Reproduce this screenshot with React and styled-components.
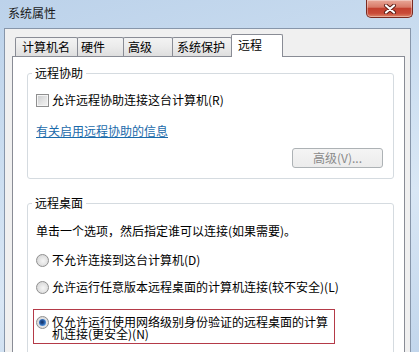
import React from "react";
import styled, { createGlobalStyle } from "styled-components";

const GlobalStyle = createGlobalStyle`
  html, body {
    margin: 0;
    padding: 0;
    overflow: hidden;
    background: #fff;
  }
  body {
    font-family: "Noto Sans CJK SC", "Noto Sans", sans-serif;
    font-size: 12px;
    color: #000;
  }
`;

const Window = styled.div`
  width: 419px;
  height: 352px;
  display: flex;
  flex-direction: column;
  overflow: hidden;
  background: linear-gradient(165deg, #bcd2ea 0%, #cddff1 40%, #d9e7f5 65%, #c2d6ec 100%);
`;

const TitleBar = styled.div`
  height: 28px;
  flex-shrink: 0;
  display: flex;
  justify-content: space-between;
  align-items: flex-start;
  padding: 0 6px 0 8px;
  box-sizing: border-box;
`;

const Title = styled.div`
  padding-top: 6px;
  line-height: 14px;
  color: #1a1a1a;
`;

const CloseButton = styled.div`
  width: 47px;
  height: 18px;
  box-sizing: border-box;
  border: 1px solid #7a2a20;
  border-top: none;
  border-radius: 0 0 5px 5px;
  background: linear-gradient(
    to bottom,
    #e9a898 0%,
    #d87a68 42%,
    #c3412f 50%,
    #c94a38 78%,
    #de8669 100%
  );
  box-shadow: inset 0 0 0 1px rgba(255, 255, 255, 0.35);
  display: flex;
  align-items: center;
  justify-content: center;
`;

const Client = styled.div`
  flex: 1;
  min-height: 0;
  margin: 0 8px 0 4px;
  border: 1px solid #8796aa;
  border-bottom: none;
  background: #f0f0f0;
  padding: 5px 5px 0 7px;
  display: flex;
  flex-direction: column;
`;

const TabStrip = styled.div`
  display: flex;
  align-items: flex-end;
  height: 22px;
  flex-shrink: 0;
  padding-left: 3px;
`;

const Tab = styled.div`
  box-sizing: border-box;
  width: ${(p) => p.$w}px;
  height: ${(p) => (p.$active ? 23 : 19)}px;
  margin-bottom: ${(p) => (p.$active ? -1 : 0)}px;
  padding-left: ${(p) => p.$pad}px;
  border: 1px solid #898c95;
  border-bottom: none;
  border-radius: 2px 2px 0 0;
  line-height: ${(p) => (p.$active ? 20 : 18)}px;
  white-space: nowrap;
  background: ${(p) =>
    p.$active ? "#fff" : "linear-gradient(to bottom, #f3f3f3 0%, #ebebeb 50%, #dedede 100%)"};
  position: relative;
  z-index: ${(p) => (p.$active ? 2 : 1)};
  & + & {
    margin-left: -1px;
  }
`;

const Panel = styled.div`
  flex: 1;
  background: #fff;
  border: 1px solid #898c95;
  padding: 0 10px 0 14px;
`;

const GroupBox = styled.fieldset`
  margin: ${(p) => p.$top}px 0 0;
  padding: 0 0 ${(p) => p.$bottom}px;
  border: 1px solid #d5dbe0;
  border-radius: 3px;
  min-width: 0;
`;

const Legend = styled.legend`
  margin-left: 4px;
  padding: 0 3px;
  line-height: 14px;
`;

const GroupBody = styled.div`
  display: flex;
  flex-direction: column;
  align-items: flex-start;
  padding: 0 10px 0 8px;
`;

const Row = styled.div`
  display: flex;
  align-items: center;
  gap: 3px;
  line-height: 14px;
  margin-top: ${(p) => p.$top}px;
  white-space: nowrap;
`;

const Text = styled.div`
  line-height: 14px;
  margin-top: ${(p) => p.$top}px;
  white-space: nowrap;
`;

const CheckBox = styled.span`
  width: 13px;
  height: 13px;
  box-sizing: border-box;
  flex-shrink: 0;
  border: 1px solid #8f8f8f;
  background: linear-gradient(135deg, #c9cbcd 0%, #e6e6e6 60%, #f3f3f3 100%);
  box-shadow: inset 0 0 0 1px #f5f5f5;
`;

const Radio = styled.span`
  width: 13px;
  height: 13px;
  box-sizing: border-box;
  flex-shrink: 0;
  border: 1px solid #8f8f8f;
  border-radius: 50%;
  background: radial-gradient(circle at 55% 55%, #f6f6f6 0%, #e0e0e0 55%, #cfcfcf 100%);
  display: flex;
  align-items: center;
  justify-content: center;
  &::after {
    content: "";
    display: ${(p) => (p.$checked ? "block" : "none")};
    width: 7px;
    height: 7px;
    border-radius: 50%;
    background: radial-gradient(
      circle at 45% 45%,
      #14305e 0%,
      #23539a 35%,
      #4f92dc 70%,
      #9cc8f2 100%
    );
  }
`;

const Link = styled.a`
  margin-top: 17px;
  line-height: 14px;
  color: #1a6aaa;
  text-decoration: underline;
  cursor: pointer;
`;

const ButtonRow = styled.div`
  align-self: stretch;
  display: flex;
  justify-content: flex-end;
  margin-top: 10px;
`;

const Button = styled.button`
  width: 91px;
  height: 20px;
  padding: 0;
  border: 1px solid #adb2b5;
  border-radius: 3px;
  background: linear-gradient(to bottom, #f4f4f4, #ececec);
  color: #8a8a8a;
  font-family: inherit;
  font-size: 12px;
  line-height: 18px;
`;

const Highlight = styled.div`
  margin: 15px 0 0 -3px;
  width: 302px;
  box-sizing: border-box;
  border: 1px solid #b43a48;
  padding: 6px 0 3px 2px;
  display: flex;
  align-items: flex-start;
  gap: 3px;
`;

const WrapText = styled.div`
  width: 280px;
  line-height: 12px;
`;

const tabs = [
  { label: "计算机名", w: 63, pad: 6 },
  { label: "硬件", w: 47, pad: 3 },
  { label: "高级", w: 50, pad: 4 },
  { label: "系统保护", w: 60, pad: 4 },
  { label: "远程", w: 52, pad: 6, active: true },
];

const CloseGlyph = () => (
  <svg width="14" height="10" viewBox="0 0 14 10">
    <path d="M3 1.5 L11 8.5 M11 1.5 L3 8.5" stroke="#5a1c14" strokeWidth="4" strokeLinecap="round" />
    <path d="M3 1.5 L11 8.5 M11 1.5 L3 8.5" stroke="#fff" strokeWidth="2.2" strokeLinecap="round" />
  </svg>
);

export default function App() {
  return (
    <>
      <GlobalStyle />
      <Window>
        <TitleBar>
          <Title>系统属性</Title>
          <CloseButton>
            <CloseGlyph />
          </CloseButton>
        </TitleBar>
        <Client>
          <TabStrip>
            {tabs.map((t) => (
              <Tab key={t.label} $w={t.w} $pad={t.pad} $active={t.active}>
                {t.label}
              </Tab>
            ))}
          </TabStrip>
          <Panel>
            <GroupBox $top={9} $bottom={10}>
              <Legend>远程协助</Legend>
              <GroupBody>
                <Row $top={13}>
                  <CheckBox />
                  <span>允许远程协助连接这台计算机(R)</span>
                </Row>
                <Link>有关启用远程协助的信息</Link>
                <ButtonRow>
                  <Button disabled>高级(V)...</Button>
                </ButtonRow>
              </GroupBody>
            </GroupBox>
            <GroupBox $top={17} $bottom={20}>
              <Legend>远程桌面</Legend>
              <GroupBody>
                <Text $top={14}>单击一个选项，然后指定谁可以连接(如果需要)。</Text>
                <Row $top={15}>
                  <Radio />
                  <span>不允许连接到这台计算机(D)</span>
                </Row>
                <Row $top={13}>
                  <Radio />
                  <span>允许运行任意版本远程桌面的计算机连接(较不安全)(L)</span>
                </Row>
                <Highlight>
                  <Radio $checked />
                  <WrapText>
                    仅允许运行使用网络级别身份验证的远程桌面的计算机连接(更安全)(N)
                  </WrapText>
                </Highlight>
              </GroupBody>
            </GroupBox>
          </Panel>
        </Client>
      </Window>
    </>
  );
}
